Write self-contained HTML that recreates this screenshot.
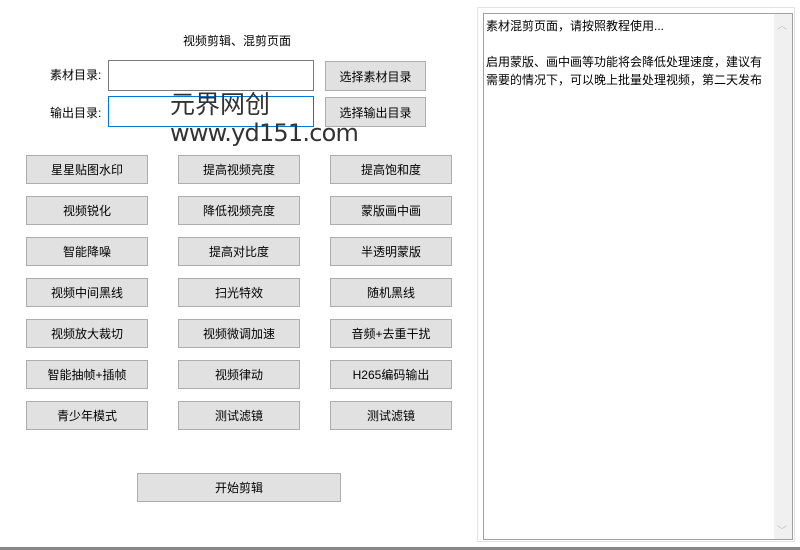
<!DOCTYPE html>
<html><head><meta charset="utf-8"><style>
body{margin:0;width:800px;height:550px;background:#fff;position:relative;overflow:hidden;font-family:"Liberation Sans","Noto Sans CJK SC",sans-serif;font-size:12px;color:#000}
.a{position:absolute}
.b{position:absolute;background:#e1e1e1;border:1px solid #adadad;box-sizing:border-box;display:flex;align-items:center;justify-content:center;font-size:12px}
.in{position:absolute;background:#fff;border:1px solid #7a7a7a;box-sizing:border-box}
</style></head><body>
<div class="a" style="left:183px;top:32px">视频剪辑、混剪页面</div>
<div class="a" style="left:50px;top:66px">素材目录:</div>
<div class="a" style="left:50px;top:104px">输出目录:</div>
<div class="in" style="left:108px;top:60px;width:206px;height:31px"></div>
<div class="in" style="left:108px;top:96px;width:206px;height:31px;border-color:#0078d7"></div>
<div class="b" style="left:325px;top:61px;width:101px;height:30px">选择素材目录</div>
<div class="b" style="left:325px;top:97px;width:101px;height:30px">选择输出目录</div>
<div class="a" style="left:170px;top:85px;font-size:25px;color:#333">元界网创</div>
<div class="a" style="left:170px;top:119px;font-size:24px;color:#333;font-family:'DejaVu Sans',sans-serif;letter-spacing:-0.8px">www.yd151.com</div>

<div class="b" style="left:26px;top:155px;width:122px;height:29px">星星贴图水印</div>
<div class="b" style="left:178px;top:155px;width:122px;height:29px">提高视频亮度</div>
<div class="b" style="left:330px;top:155px;width:122px;height:29px">提高饱和度</div>
<div class="b" style="left:26px;top:196px;width:122px;height:29px">视频锐化</div>
<div class="b" style="left:178px;top:196px;width:122px;height:29px">降低视频亮度</div>
<div class="b" style="left:330px;top:196px;width:122px;height:29px">蒙版画中画</div>
<div class="b" style="left:26px;top:237px;width:122px;height:29px">智能降噪</div>
<div class="b" style="left:178px;top:237px;width:122px;height:29px">提高对比度</div>
<div class="b" style="left:330px;top:237px;width:122px;height:29px">半透明蒙版</div>
<div class="b" style="left:26px;top:278px;width:122px;height:29px">视频中间黑线</div>
<div class="b" style="left:178px;top:278px;width:122px;height:29px">扫光特效</div>
<div class="b" style="left:330px;top:278px;width:122px;height:29px">随机黑线</div>
<div class="b" style="left:26px;top:319px;width:122px;height:29px">视频放大裁切</div>
<div class="b" style="left:178px;top:319px;width:122px;height:29px">视频微调加速</div>
<div class="b" style="left:330px;top:319px;width:122px;height:29px">音频+去重干扰</div>
<div class="b" style="left:26px;top:360px;width:122px;height:29px">智能抽帧+插帧</div>
<div class="b" style="left:178px;top:360px;width:122px;height:29px">视频律动</div>
<div class="b" style="left:330px;top:360px;width:122px;height:29px">H265编码输出</div>
<div class="b" style="left:26px;top:401px;width:122px;height:29px">青少年模式</div>
<div class="b" style="left:178px;top:401px;width:122px;height:29px">测试滤镜</div>
<div class="b" style="left:330px;top:401px;width:122px;height:29px">测试滤镜</div>
<div class="b" style="left:137px;top:473px;width:204px;height:29px">开始剪辑</div>

<div class="a" style="left:477px;top:7px;width:318px;height:535px;border:1px solid #e3e3e3;box-sizing:border-box"></div>
<div class="a" style="left:483px;top:13px;width:310px;height:527px;border:1px solid #a0a0a0;box-sizing:border-box;background:#fff"></div>
<div class="a" style="left:774px;top:14px;width:18px;height:525px;background:#f0f0f0"></div>
<div class="a" style="left:777px;top:17px;color:#c0c0c0;font-size:10px">︿</div>
<div class="a" style="left:777px;top:522px;color:#c0c0c0;font-size:10px">﹀</div>
<div class="a" style="left:486px;top:17px;line-height:18px;white-space:pre">素材混剪页面，请按照教程使用...

启用蒙版、画中画等功能将会降低处理速度，建议有
需要的情况下，可以晚上批量处理视频，第二天发布</div>
<div class="a" style="left:0;top:547px;width:800px;height:3px;background:#888"></div>
</body></html>
